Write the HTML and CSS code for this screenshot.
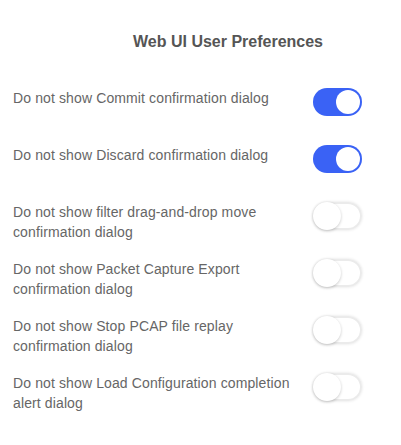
FILE: index.html
```html
<!DOCTYPE html>
<html>
<head>
<meta charset="utf-8">
<link rel="stylesheet" href="styles.css">
</head>
<body>
<div class="prefs">
  <h1 class="title">Web UI User Preferences</h1>
  <div class="list">
    <div class="row"><span class="label">Do not show Commit confirmation dialog</span><span class="toggle on"><span class="knob"></span></span></div>
    <div class="row"><span class="label">Do not show Discard confirmation dialog</span><span class="toggle on"><span class="knob"></span></span></div>
    <div class="row"><span class="label">Do not show filter drag-and-drop move confirmation dialog</span><span class="toggle"><span class="knob"></span></span></div>
    <div class="row"><span class="label">Do not show Packet Capture Export confirmation dialog</span><span class="toggle"><span class="knob"></span></span></div>
    <div class="row"><span class="label">Do not show Stop PCAP file replay confirmation dialog</span><span class="toggle"><span class="knob"></span></span></div>
    <div class="row"><span class="label">Do not show Load Configuration completion alert dialog</span><span class="toggle"><span class="knob"></span></span></div>
  </div>
</div>
</body>
</html>
```
FILE: styles.css
```css
html, body { margin: 0; padding: 0; background: #fff; }
body { font-family: "Liberation Sans", Arial, sans-serif; color: #666; }
.prefs { padding: 32px 0 0 13px; width: 349px; }
.title {
  margin: 0 0 36px 120px;
  font-size: 16px;
  font-weight: bold;
  color: #555;
  line-height: 20px;
}
.list { display: flex; flex-direction: column; gap: 17px; }
.row { display: flex; align-items: flex-start; justify-content: space-between; min-height: 40px; }
.label { font-size: 14px; letter-spacing: 0.12px; line-height: 20px; max-width: 284px; }
.toggle {
  position: relative;
  flex: none;
  width: 49px; height: 28px;
  border-radius: 14px;
  background: #fff;
  box-shadow: inset 0 0 0 2px #ebebeb, 0 0 3px rgba(0,0,0,0.12);
}
.toggle .knob {
  position: absolute;
  left: 0; top: 0;
  width: 28px; height: 28px;
  border-radius: 50%;
  background: #fff;
  box-shadow: 0 1px 3px rgba(0,0,0,0.22);
}
.toggle.on { background: #3a62f5; box-shadow: none; }
.toggle.on .knob { left: 23px; top: 2px; width: 24px; height: 24px; box-shadow: none; }
```
